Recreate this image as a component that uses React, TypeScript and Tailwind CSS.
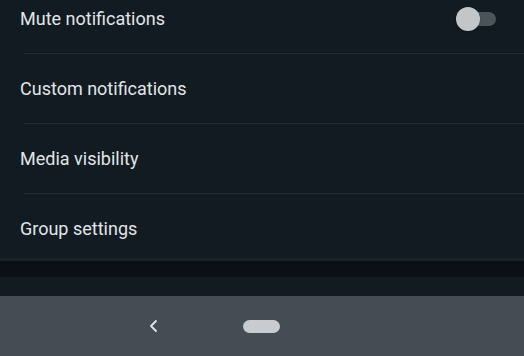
import React from "react";

function Row({ label, children, divider = true, last = false }: { label: string; children?: React.ReactNode; divider?: boolean; last?: boolean }) {
  return (
    <div className={`relative flex items-center justify-between pl-5 pr-7 ${last ? "h-[64px] pt-[4px]" : "h-[70px] pb-[2px]"}`}>
      <span className="text-[18px] text-[#e1e5e8]" style={{ fontFamily: "Roboto, sans-serif" }}>{label}</span>
      {children}
      {divider && <div className="absolute left-6 right-0 bottom-0 h-px bg-[#1f2a31]" />}
    </div>
  );
}

export default function App() {
  return (
    <div className="w-[524px] h-[356px] bg-[#111b21] flex flex-col overflow-hidden">
      <div className="-mt-[16px]">
        <Row label="Mute notifications">
          <div className="relative w-[40px] h-[24px] mt-[2px]">
            <div className="absolute left-[12px] top-[5px] w-[28px] h-[14px] rounded-full bg-[#4a5459]" />
            <div className="absolute left-0 top-0 w-[24px] h-[24px] rounded-full bg-[#c3c6c8] shadow" />
          </div>
        </Row>
        <Row label="Custom notifications" />
        <Row label="Media visibility" />
        <Row label="Group settings" divider={false} last />
      </div>
      <div className="h-[3px] bg-[#1a2329]" />
      <div className="h-[16px] bg-[#0a1015]" />
      <div className="flex-1 bg-[#111b21]" />
      <div className="h-[60px] bg-[#454c54] flex items-center">
        <svg width="12" height="14" viewBox="0 0 12 14" className="ml-[148px]">
          <path d="M8 2 L3 7 L8 12" fill="none" stroke="#e2e5e8" strokeWidth="1.8" strokeLinecap="round" strokeLinejoin="round" />
        </svg>
        <div className="ml-[83px] w-[37px] h-[13px] rounded-full bg-[#c8ccd0]" />
      </div>
    </div>
  );
}
